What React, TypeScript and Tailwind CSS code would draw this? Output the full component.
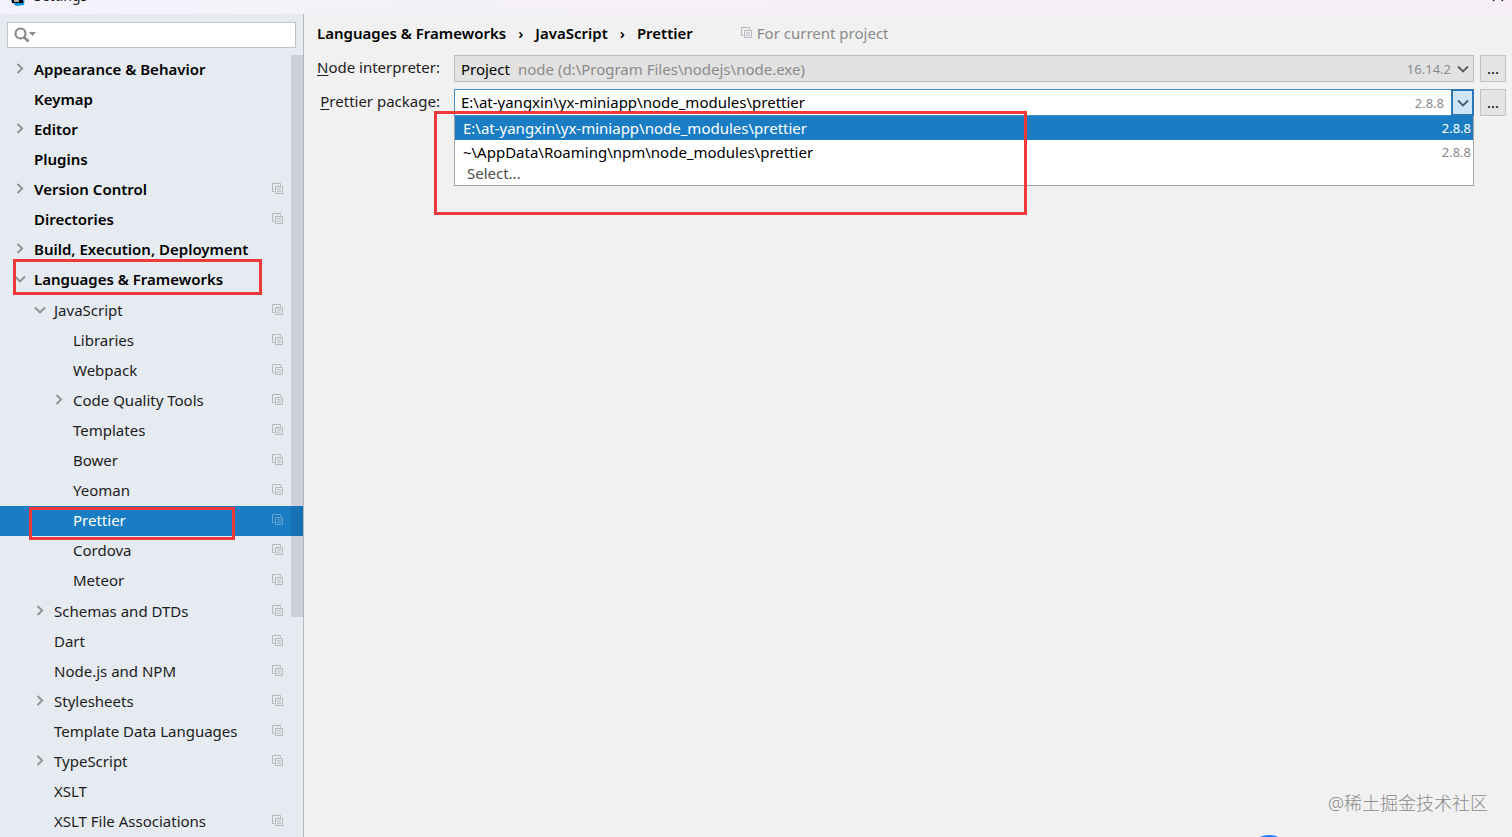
import { useState } from "react";
import clsx from "clsx";

interface TreeNode {
  label: string;
  perProject?: boolean;
  expandable?: boolean;
  children?: TreeNode[];
}

const TREE: TreeNode[] = [
  { label: "Appearance & Behavior", expandable: true },
  { label: "Keymap" },
  { label: "Editor", expandable: true },
  { label: "Plugins" },
  { label: "Version Control", expandable: true, perProject: true },
  { label: "Directories", perProject: true },
  { label: "Build, Execution, Deployment", expandable: true },
  {
    label: "Languages & Frameworks",
    expandable: true,
    children: [
      {
        label: "JavaScript",
        expandable: true,
        perProject: true,
        children: [
          { label: "Libraries", perProject: true },
          { label: "Webpack", perProject: true },
          { label: "Code Quality Tools", expandable: true, perProject: true },
          { label: "Templates", perProject: true },
          { label: "Bower", perProject: true },
          { label: "Yeoman", perProject: true },
          { label: "Prettier", perProject: true },
          { label: "Cordova", perProject: true },
          { label: "Meteor", perProject: true },
        ],
      },
      { label: "Schemas and DTDs", expandable: true, perProject: true },
      { label: "Dart", perProject: true },
      { label: "Node.js and NPM", perProject: true },
      { label: "Stylesheets", expandable: true, perProject: true },
      { label: "Template Data Languages", perProject: true },
      { label: "TypeScript", expandable: true, perProject: true },
      { label: "XSLT" },
      { label: "XSLT File Associations", perProject: true },
    ],
  },
];

const PACKAGES = [
  { path: "E:\\at-yangxin\\yx-miniapp\\node_modules\\prettier", version: "2.8.8" },
  { path: "~\\AppData\\Roaming\\npm\\node_modules\\prettier", version: "2.8.8" },
];

const INDENT = ["pl-3", "pl-8", "pl-[51px]"];

function Chevron({ open, className }: { open?: boolean; className?: string }) {
  return (
    <svg
      viewBox="0 0 16 16"
      className={clsx("size-4 shrink-0", className)}
      fill="none"
      stroke="currentColor"
      strokeWidth="1.8">
      <path d={open ? "M3 5.5 8 10.5l5-5" : "M5.5 3 10.2 7.5l-4.7 4.5"} />
    </svg>
  );
}

function ProjectIcon({ className }: { className?: string }) {
  return (
    <svg
      viewBox="0 0 12 12"
      className={clsx("size-3 shrink-0", className)}
      fill="none"
      stroke="currentColor">
      <path d="M2.5 8.5h-2v-8h8v2" />
      <path d="M3.5 3.5h7v7h-7z" />
      <path d="M5 5.5h4M5 7h4M5 8.5h4" strokeWidth="0.7" />
    </svg>
  );
}

interface TreeListProps {
  nodes: TreeNode[];
  depth: number;
  selected: string;
  onSelect: (label: string) => void;
}

function TreeList({ nodes, depth, selected, onSelect }: TreeListProps) {
  return (
    <ul className={clsx(depth === 1 && "pt-px", depth === 2 && "pb-px")}>
      {nodes.map((node) => {
        const active = node.label === selected;
        return (
          <li key={node.label}>
            <button
              type="button"
              onClick={() => onSelect(node.label)}
              className={clsx(
                "flex h-[30px] w-full items-center pr-[19px] pb-0.5 text-left",
                INDENT[depth],
                depth === 0 && "font-semibold text-black",
                active && "bg-[#1a7dc4] text-white"
              )}>
              {node.expandable ? (
                <Chevron open={!!node.children} className="text-[#8d9094]" />
              ) : (
                <span className="w-4" />
              )}
              <span className="ml-1.5 flex-1 whitespace-nowrap">{node.label}</span>
              {node.perProject && (
                <ProjectIcon className={active ? "text-[#6aa3cc]" : "text-[#b3b8bd]"} />
              )}
            </button>
            {node.children && (
              <TreeList
                nodes={node.children}
                depth={depth + 1}
                selected={selected}
                onSelect={onSelect}
              />
            )}
          </li>
        );
      })}
    </ul>
  );
}

function TitleBar() {
  return (
    <header className="flex h-3.5 items-start justify-between overflow-hidden bg-linear-to-r from-[#f3f2fa] via-[#f6f0f9] to-[#f7eef7] pr-2 pl-2.5">
      <div className="-mt-3.5 flex items-start gap-2">
        <svg viewBox="0 0 16 16" className="mt-1 size-4">
          <path d="M4 2 15 4l-1 11-8 1-5-5z" fill="#1595dc" />
          <path d="M2 2h11v11H2z" fill="#000" />
          <path d="M4 11h5" stroke="#fff" strokeWidth="1.4" />
        </svg>
        <h1 className="text-sm leading-5">Settings</h1>
      </div>
      <button type="button" aria-label="Close" className="-mt-2.5">
        <svg viewBox="0 0 12 12" className="size-3" stroke="#222" strokeWidth="1.3">
          <path d="M1 1l10 10M11 1 1 11" />
        </svg>
      </button>
    </header>
  );
}

function Sidebar() {
  const [selected, setSelected] = useState("Prettier");

  return (
    <aside className="relative w-76 shrink-0 border-r border-[#b4b7bb] bg-[#e6eaf1]">
      <div className="px-[7px] pt-2 pb-[7px]">
        <label className="flex h-[26px] items-center border border-[#c0c3c6] bg-white px-1.5">
          <svg viewBox="0 0 24 16" className="h-4 w-6 shrink-0 text-[#8a8a8a]">
            <circle cx="6.5" cy="6.5" r="5" fill="none" stroke="currentColor" strokeWidth="2.2" />
            <path d="m10 10 4.5 4.5" stroke="currentColor" strokeWidth="2.6" />
            <path d="M15 5h7l-3.5 4z" fill="currentColor" />
          </svg>
          <input
            type="search"
            aria-label="Search settings"
            className="min-w-0 flex-1 bg-transparent outline-none"
          />
        </label>
      </div>
      <nav className="relative">
        <TreeList nodes={TREE} depth={0} selected={selected} onSelect={setSelected} />
        <div className="absolute top-0 right-0 h-[562px] w-3 bg-[#00204a]/12" />
        <div className="absolute top-[204px] left-[13px] h-9 w-[249px] border-3 border-[#ee383a]" />
        <div className="absolute top-[452px] left-[29px] h-[33px] w-[206px] border-3 border-[#ee383a]" />
      </nav>
    </aside>
  );
}

function MoreButton({ label }: { label: string }) {
  return (
    <button
      type="button"
      aria-label={label}
      className="flex h-[27px] w-[26px] items-center justify-center border border-[#c3c3c3] bg-[#e4e4e4] pb-0.5 text-black">
      ...
    </button>
  );
}

function InterpreterField() {
  return (
    <div className="grid items-center">
      <select
        id="interpreter"
        className="col-start-1 row-start-1 h-[27px] w-full appearance-none border border-[#bcbcbc] bg-[#e2e2e2] pl-1.5 text-black">
        <option>Project</option>
      </select>
      <div className="pointer-events-none col-start-1 row-start-1 flex items-center pr-[3px] pl-16 text-[#8a8a8a]">
        <span className="flex-1">node (d:\Program Files\nodejs\node.exe)</span>
        <span className="mr-1 text-[13px]">16.14.2</span>
        <Chevron open className="text-[#5a5a5a]" />
      </div>
    </div>
  );
}

function PackageField() {
  const [value, setValue] = useState(PACKAGES[0].path);

  return (
    <div className="relative">
      <div className="flex h-[27px] items-stretch border border-[#3d8fd0] bg-white">
        <input
          id="package"
          value={value}
          onChange={(e) => setValue(e.target.value)}
          className="min-w-0 flex-1 pb-0.5 pl-1.5 text-black outline-none"
        />
        <span className="self-center pr-2 text-[13px] text-[#8a8a8a]">2.8.8</span>
        <button
          type="button"
          aria-label="Show packages"
          className="-m-px flex w-[23px] items-center justify-center border-2 border-[#2a78b8] bg-[#cde5f7]">
          <Chevron open className="text-[#4a5a68]" />
        </button>
      </div>
      <ul
        role="listbox"
        aria-label="Prettier packages"
        className="absolute top-full right-0 left-0 border border-t-0 border-[#a5a5a5] bg-white pb-0.5 text-black">
        {PACKAGES.map((item) => {
          const active = item.path === value;
          return (
            <li
              key={item.path}
              role="option"
              aria-selected={active}
              onClick={() => setValue(item.path)}
              className={clsx(
                "flex items-center justify-between pr-0.5 pl-2",
                active ? "h-6 bg-[#1a7dc4] text-white" : "h-[23px]"
              )}>
              {item.path}
              <span className={clsx("text-[13px]", !active && "text-[#8a8a8a]")}>
                {item.version}
              </span>
            </li>
          );
        })}
        <li role="option" aria-selected={false} className="h-5 pl-3 leading-5 text-[#4c4c4c]">
          Select...
        </li>
      </ul>
      <div className="pointer-events-none absolute top-[22px] -left-5 h-[104px] w-[593px] border-3 border-[#ee383a]" />
    </div>
  );
}

export default function App() {
  return (
    <div className="relative flex min-h-screen flex-col overflow-hidden bg-[#f1f1f1] font-['Noto_Sans','Noto_Sans_CJK_SC',sans-serif] text-[15px] leading-5 text-[#1c1c1c]">
      <TitleBar />
      <div className="flex flex-1">
        <Sidebar />
        <main className="min-w-0 flex-1 pt-[9px] pr-1.5 pl-[13px]">
          <div className="flex h-5 items-center whitespace-nowrap">
            <h2 className="flex gap-3 font-semibold text-black">
              <span>Languages &amp; Frameworks</span>
              <span>›</span>
              <span>JavaScript</span>
              <span>›</span>
              <span>Prettier</span>
            </h2>
            <span className="ml-12 flex items-center gap-1 text-[#8a8a8a]">
              <ProjectIcon className="text-[#b3b8bd]" />
              For current project
            </span>
          </div>
          <form className="mt-3 grid grid-cols-[auto_1fr_auto] items-center gap-x-1.5 gap-y-[7px]">
            <label htmlFor="interpreter" className="mr-2 pb-1 text-right">
              <span className="underline underline-offset-2">N</span>ode interpreter:
            </label>
            <InterpreterField />
            <MoreButton label="Browse interpreters" />
            <label htmlFor="package" className="mr-2 pb-1 text-right">
              <span className="underline underline-offset-2">P</span>rettier package:
            </label>
            <PackageField />
            <MoreButton label="Browse packages" />
          </form>
        </main>
      </div>
      <p className="absolute right-6 bottom-[22px] text-lg leading-6 font-light text-[#8a8a8a]">
        @稀土掘金技术社区
      </p>
      <div className="absolute right-[218px] -bottom-12 size-[50px] rounded-full bg-[#1e80ff]" />
    </div>
  );
}
